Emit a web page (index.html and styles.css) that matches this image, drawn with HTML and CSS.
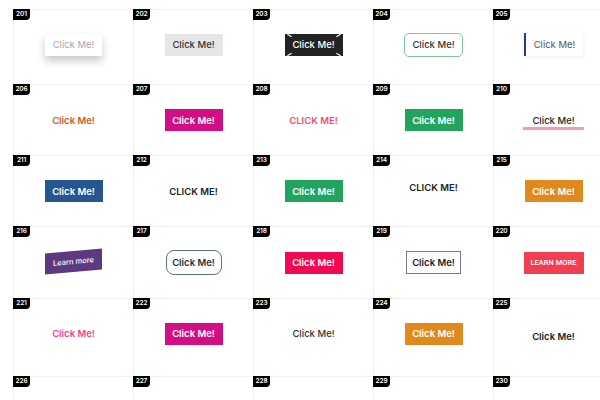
FILE: index.html
```html
<!DOCTYPE html>
<html>
<head>
<meta charset="utf-8">
<link rel="stylesheet" href="styles.css">
</head>
<body>
<div class="grid">
  <div class="cell r1"><span class="badge">201</span><button class="btn b201">Click Me!</button></div>
  <div class="cell r1"><span class="badge">202</span><button class="btn b202">Click Me!</button></div>
  <div class="cell r1"><span class="badge">203</span><button class="btn b203"><i class="n tl"></i><i class="n tr"></i><i class="n bl"></i><i class="n br"></i>Click Me!</button></div>
  <div class="cell r1"><span class="badge">204</span><button class="btn b204">Click Me!</button></div>
  <div class="cell r1"><span class="badge">205</span><button class="btn b205">Click Me!</button></div>

  <div class="cell"><span class="badge">206</span><button class="link b206">Click Me!</button></div>
  <div class="cell"><span class="badge">207</span><button class="btn solid magenta">Click Me!</button></div>
  <div class="cell"><span class="badge">208</span><button class="link b208">CLICK ME!</button></div>
  <div class="cell"><span class="badge">209</span><button class="btn solid green">Click Me!</button></div>
  <div class="cell"><span class="badge">210</span><button class="link b210">Click Me!</button></div>

  <div class="cell"><span class="badge">211</span><button class="btn solid blue">Click Me!</button></div>
  <div class="cell"><span class="badge">212</span><button class="link caps">CLICK ME!</button></div>
  <div class="cell"><span class="badge">213</span><button class="btn solid green">Click Me!</button></div>
  <div class="cell up4"><span class="badge">214</span><button class="link caps">CLICK ME!</button></div>
  <div class="cell"><span class="badge">215</span><button class="btn solid orange">Click Me!</button></div>

  <div class="cell up1"><span class="badge">216</span><button class="btn b216">Learn more</button></div>
  <div class="cell"><span class="badge">217</span><button class="btn b217">Click Me!</button></div>
  <div class="cell"><span class="badge">218</span><button class="btn solid red">Click Me!</button></div>
  <div class="cell"><span class="badge">219</span><button class="btn b219">Click Me!</button></div>
  <div class="cell"><span class="badge">220</span><button class="btn b220">LEARN MORE</button></div>

  <div class="cell r5"><span class="badge">221</span><button class="link b221">Click Me!</button></div>
  <div class="cell r5"><span class="badge">222</span><button class="btn solid magenta">Click Me!</button></div>
  <div class="cell r5"><span class="badge">223</span><button class="link b223">Click Me!</button></div>
  <div class="cell r5"><span class="badge">224</span><button class="btn solid orange">Click Me!</button></div>
  <div class="cell r5b"><span class="badge">225</span><button class="link b225">Click Me!</button></div>

  <div class="cell"><span class="badge">226</span></div>
  <div class="cell"><span class="badge">227</span></div>
  <div class="cell"><span class="badge">228</span></div>
  <div class="cell"><span class="badge">229</span></div>
  <div class="cell"><span class="badge">230</span></div>
</div>
</body>
</html>
```
FILE: styles.css
```css
html, body {
  margin: 0;
  padding: 0;
  background: #fff;
  overflow: hidden;
  width: 600px;
  height: 400px;
}

body {
  font-family: "Inter", "Noto Sans", sans-serif;
}

.grid {
  margin: 9px 0 0 13px;
  width: 601px;
  display: grid;
  grid-template-columns: repeat(5, 120px);
  grid-template-rows: 75px 71px 71px 72px 78px 24px;
  border-left: 1px solid #f0f0f0;
  border-top: 1px solid #f0f0f0;
}

.cell {
  position: relative;
  border-right: 1px solid #f0f0f0;
  border-bottom: 1px solid #f0f0f0;
  display: flex;
  align-items: center;
  justify-content: center;
}

.r1 { padding-bottom: 5px; }
.r5 { padding-bottom: 8px; }
.r5b { padding-bottom: 3px; }
.up4 { padding-bottom: 8px; }
.up1 { padding-bottom: 2px; }

.badge {
  position: absolute;
  top: -1px;
  left: -1px;
  width: 17px;
  height: 11px;
  background: #000;
  color: #fff;
  font-size: 6.5px;
  font-weight: 600;
  line-height: 11px;
  text-align: center;
  border-bottom-right-radius: 4px;
  letter-spacing: -0.1px;
}

.btn, .link {
  font-family: inherit;
  border: 0;
  margin: 0;
  padding: 0;
  background: none;
  cursor: pointer;
  font-size: 9.5px;
  white-space: nowrap;
}

.btn {
  width: 58px;
  height: 22px;
  display: inline-flex;
  align-items: center;
  justify-content: center;
  position: relative;
}

.b201 {
  background: #fff;
  color: #a8a8a8;
  box-shadow: 0 5px 9px rgba(0, 0, 0, 0.22);
  width: 57px;
  font-weight: 400;
}

.b202 {
  background: #e6e6e6;
  color: #333;
  font-weight: 500;
}

.b203 {
  background: #232323;
  color: #fff;
  font-weight: 500;
  width: 58px;
}

.n {
  position: absolute;
  width: 5px;
  height: 1px;
  background: #fff;
}
.tl { top: 1px; left: 2px; transform: rotate(30deg); }
.tr { top: 1px; right: 2px; transform: rotate(-30deg); }
.bl { bottom: 1px; left: 2px; transform: rotate(-30deg); }
.br { bottom: 1px; right: 2px; transform: rotate(30deg); }

.b204 {
  background: #fff;
  color: #333;
  border: 1.5px solid #7fcb98;
  border-radius: 5px;
  width: 59px;
  height: 24px;
  font-weight: 500;
}

.b205 {
  background: #fff;
  color: #555;
  border-left: 2px solid #2639a0;
  box-shadow: 0 1px 4px rgba(0, 0, 0, 0.08);
  width: 59px;
  height: 23px;
}

.solid {
  color: #fff;
  font-weight: 600;
}
.magenta { background: #d30d84; }
.green { background: #22a45f; }
.blue { background: #275590; }
.orange { background: #e08a1e; }
.red { background: #f1094f; }

.b206 { color: #d35a1a; font-weight: 600; }
.b208 { color: #f2506d; font-weight: 600; }

.b210 {
  color: #222;
  font-weight: 500;
  position: relative;
  padding: 0 9px;
  margin-top: 1px;
}
.b210::after {
  content: "";
  position: absolute;
  left: 0;
  right: 0;
  bottom: -4px;
  height: 3px;
  background: #f79aa9;
}

.caps { color: #222; font-weight: 600; }

.b216 {
  background: #5d3a7f;
  color: #fff;
  font-size: 7.5px;
  font-weight: 500;
  width: 57px;
  height: 21px;
  transform: skewY(-5deg);
}

.b217 {
  background: #fff;
  color: #213141;
  border: 1px solid #5c7181;
  border-radius: 8px;
  width: 56px;
  height: 25px;
  font-weight: 600;
}

.b219 {
  background: #fff;
  color: #222;
  border: 1.5px solid #7a7590;
  width: 55px;
  height: 23px;
  font-weight: 600;
}

.b220 {
  background: #f03f4f;
  color: #fff;
  font-family: "Roboto", sans-serif;
  font-size: 7.5px;
  font-weight: 500;
  width: 60px;
}

.b221 { color: #f23e96; font-weight: 600; }
.b223 { color: #333; font-weight: 500; }
.b225 { color: #222; font-weight: 600; }
```
